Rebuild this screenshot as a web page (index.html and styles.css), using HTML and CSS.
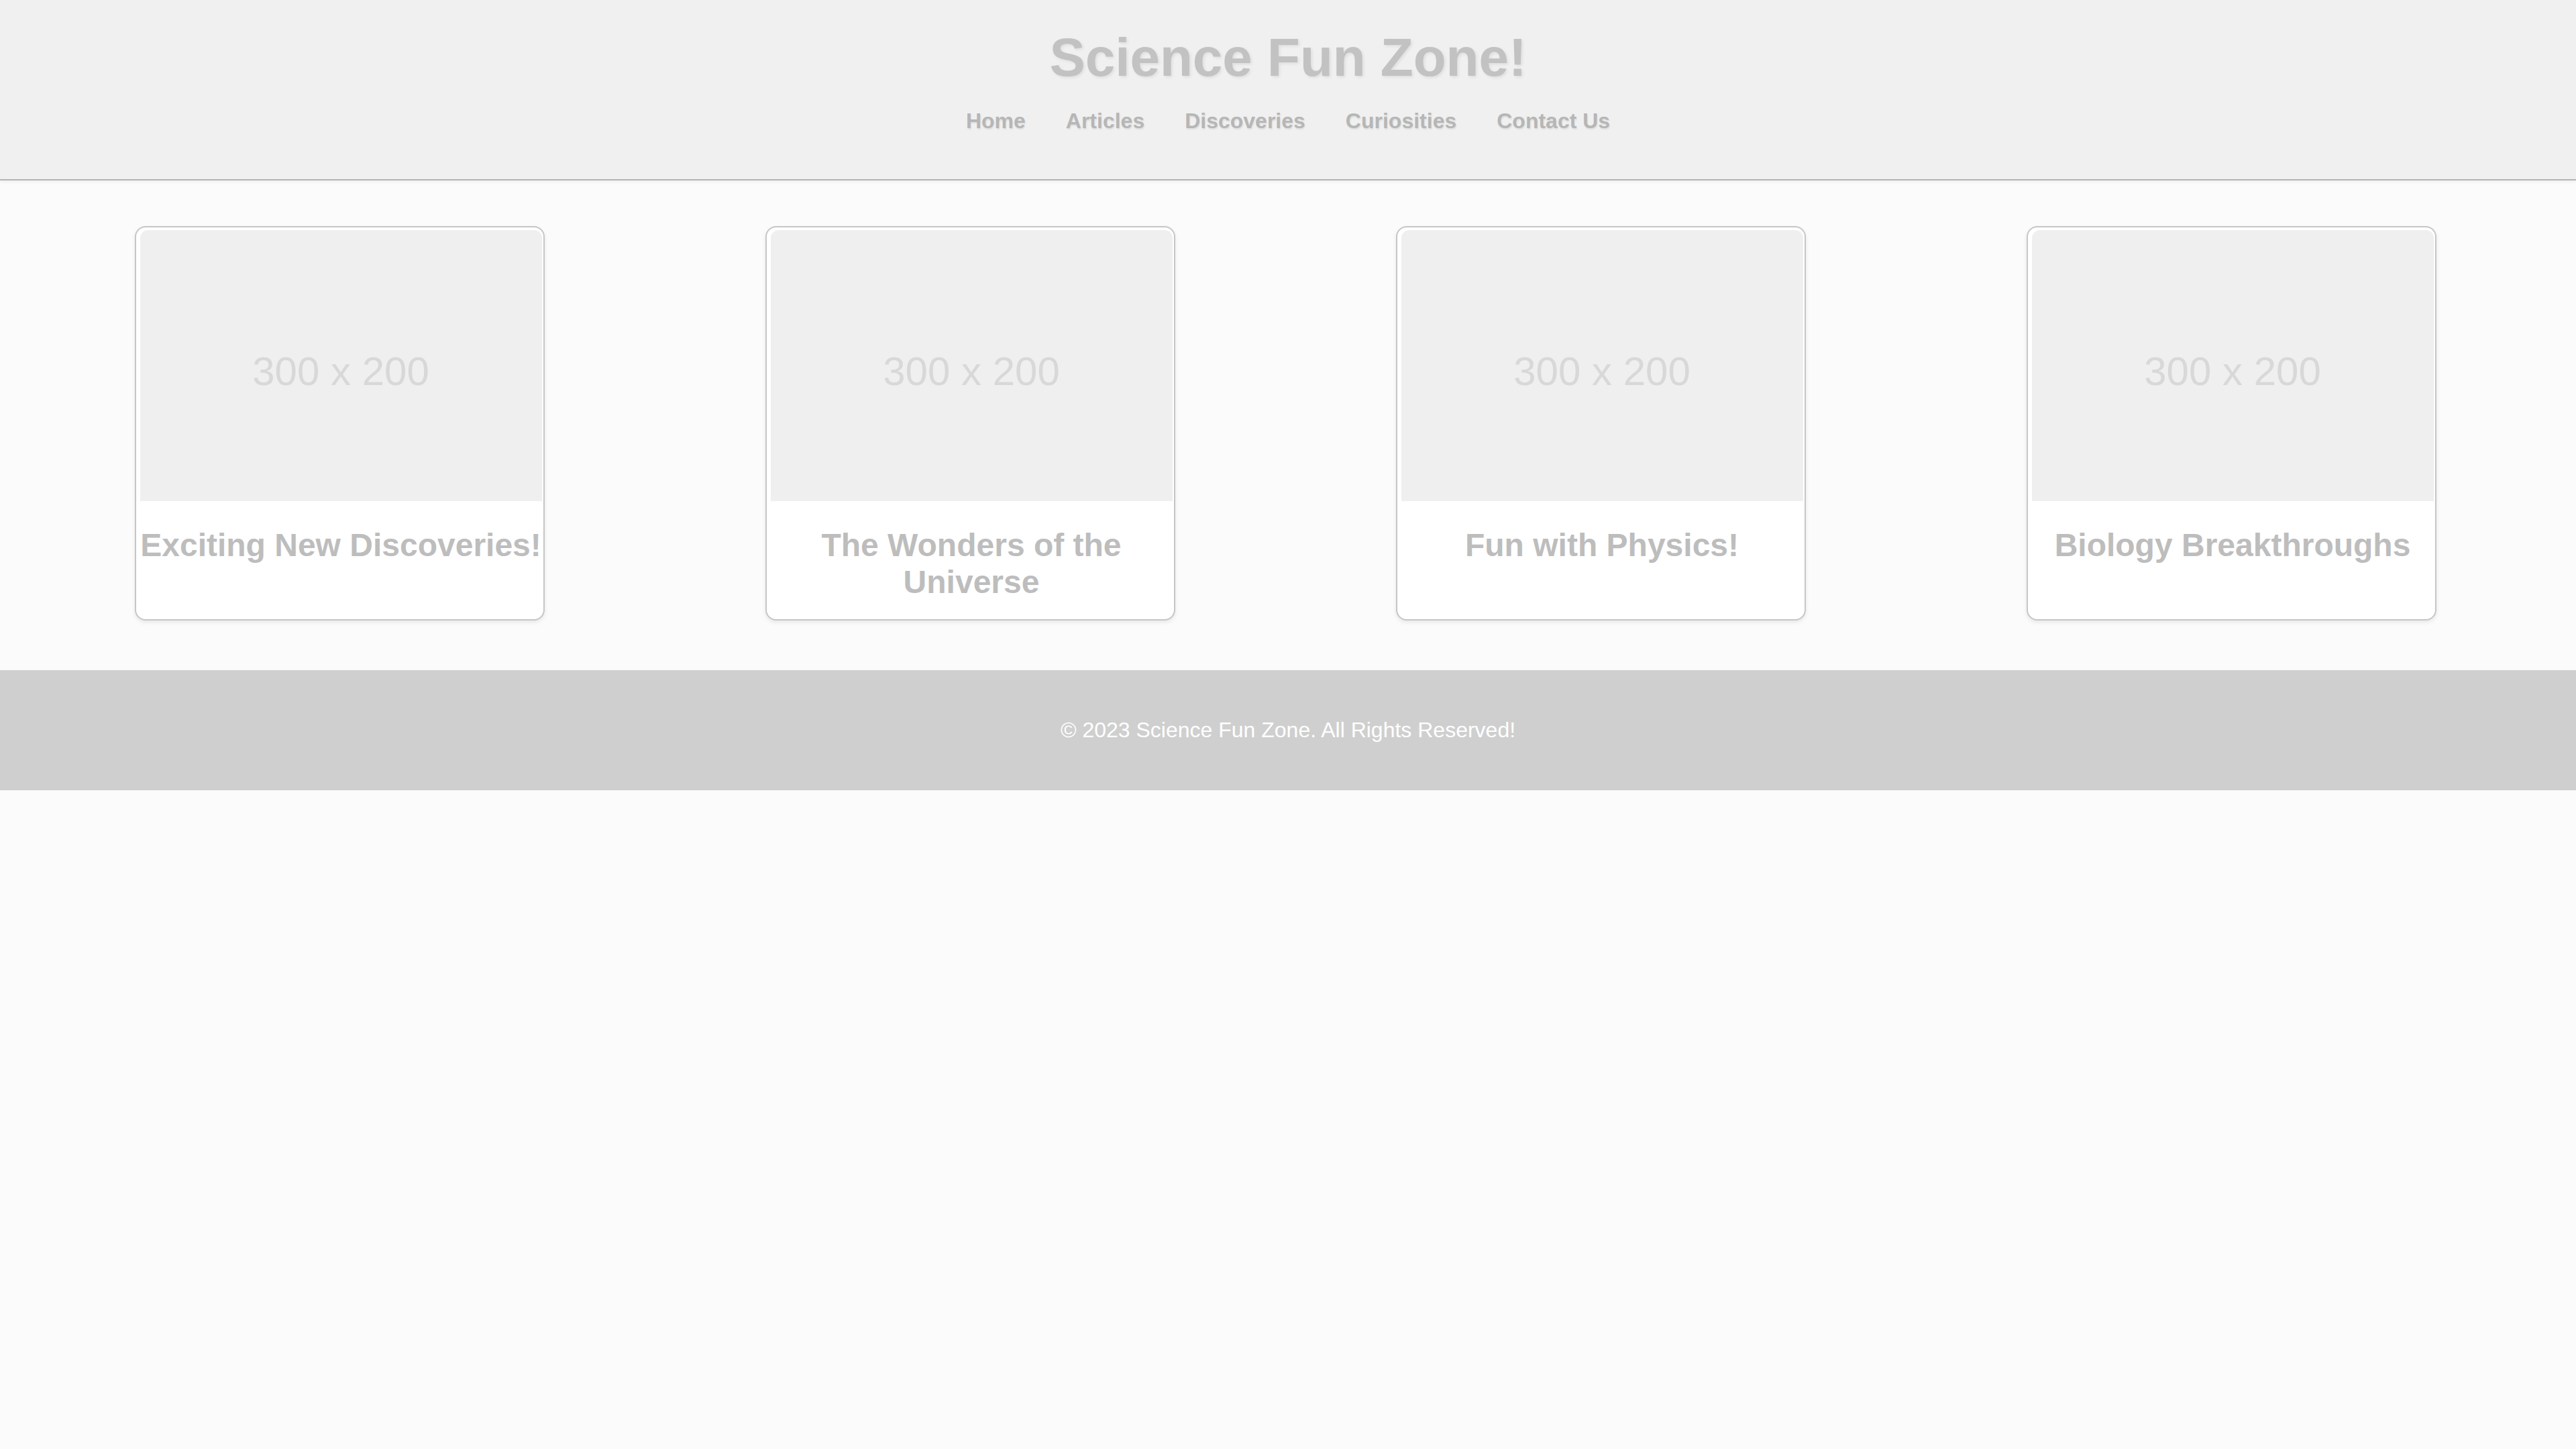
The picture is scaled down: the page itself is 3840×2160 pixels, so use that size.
FILE: index.html
```html
<!DOCTYPE html>
<html lang="en">
<head>
<meta charset="utf-8">
<title>Science Fun Zone!</title>
<link rel="stylesheet" href="styles.css">
</head>
<body>
<header class="site-header">
  <h1 class="site-title">Science Fun Zone!</h1>
  <nav class="site-nav">
    <a href="#">Home</a>
    <a href="#">Articles</a>
    <a href="#">Discoveries</a>
    <a href="#">Curiosities</a>
    <a href="#">Contact Us</a>
  </nav>
</header>
<main class="cards">
  <article class="card">
    <div class="card-image">300 x 200</div>
    <h2 class="card-title">Exciting New Discoveries!</h2>
  </article>
  <article class="card">
    <div class="card-image">300 x 200</div>
    <h2 class="card-title">The Wonders of the Universe</h2>
  </article>
  <article class="card">
    <div class="card-image">300 x 200</div>
    <h2 class="card-title">Fun with Physics!</h2>
  </article>
  <article class="card">
    <div class="card-image">300 x 200</div>
    <h2 class="card-title">Biology Breakthroughs</h2>
  </article>
</main>
<footer class="site-footer">
  <p>&copy; 2023 Science Fun Zone. All Rights Reserved!</p>
</footer>
</body>
</html>
```
FILE: styles.css
```css
* { box-sizing: border-box; }

html, body {
  margin: 0;
  padding: 0;
  background: #fbfbfb;
  font-family: "Liberation Sans", Arial, sans-serif;
}

.site-header {
  background: #f0f0f0;
  padding: 40px 0 68px;
  border-bottom: 2px solid #b4b4b4;
  box-shadow: 0 2px 5px rgba(0, 0, 0, 0.06);
  text-align: center;
}

.site-title {
  margin: 0;
  font-size: 80px;
  font-weight: bold;
  color: #c2c2c2;
  text-shadow: 2px 2px 4px rgba(0, 0, 0, 0.08);
}

.site-nav {
  margin-top: 30px;
  display: flex;
  justify-content: center;
  gap: 60px;
}

.site-nav a {
  font-size: 32px;
  font-weight: bold;
  color: #b6b6b6;
  text-decoration: none;
  text-shadow: 1px 2px 2px rgba(0, 0, 0, 0.08);
}

.cards {
  display: flex;
  justify-content: space-around;
  align-items: stretch;
  padding: 68px 44px 74px 36px;
}

.card {
  width: 611px;
  background: #ffffff;
  border: 2px solid #c6c6c6;
  border-radius: 16px;
  padding: 4px 2px 0 6px;
  box-shadow: 0 3px 6px rgba(0, 0, 0, 0.08);
  text-align: center;
}

.card-image {
  height: 404px;
  background: #efefef;
  border-radius: 12px 12px 0 0;
  display: flex;
  align-items: center;
  justify-content: center;
  font-size: 60px;
  color: #d8d8d8;
  padding-top: 16px;
}

.card-title {
  margin: 38px 0 28px;
  font-size: 48px;
  font-weight: bold;
  color: #bdbdbd;
}

.site-footer {
  background: #cfcfcf;
  padding: 71px 0;
  text-align: center;
}

.site-footer p {
  margin: 0;
  font-size: 32px;
  color: #ffffff;
}
```
